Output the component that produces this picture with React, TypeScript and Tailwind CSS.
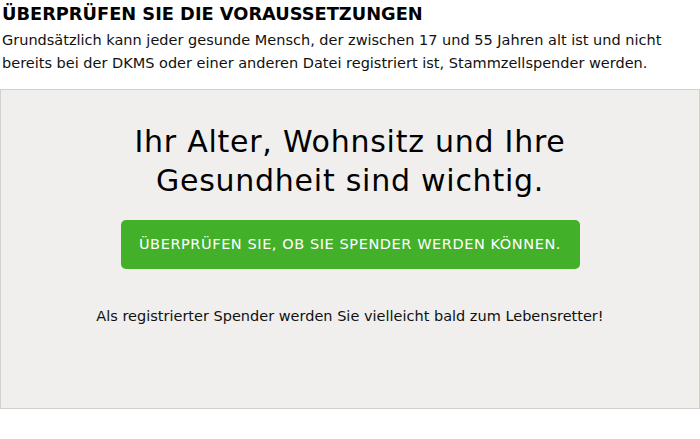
export default function App() {
  return (
    <div className="w-[700px] h-[439px] bg-white text-black font-['DejaVu_Sans',sans-serif]">
      <div className="pl-[2px] pt-[3px]">
        <h2 className="text-[17.8px] leading-[22px] font-bold">ÜBERPRÜFEN SIE DIE VORAUSSETZUNGEN</h2>
        <p className="mt-[4px] text-[14.5px] leading-[23px] text-[#111]">
          Grundsätzlich kann jeder gesunde Mensch, der zwischen 17 und 55 Jahren alt ist und nicht bereits bei der DKMS oder einer anderen Datei registriert ist, Stammzellspender werden.
        </p>
      </div>
      <div className="mt-[14px] h-[320px] border border-[#d2d1cb] bg-[#f0efed] flex flex-col items-center">
        <h1 className="mt-[33px] w-[520px] text-center text-[30px] leading-[38.5px] tracking-[0.025em] text-black">
          Ihr Alter, Wohnsitz und Ihre Gesundheit sind wichtig.
        </h1>
        <button className="mt-[20px] w-[459px] h-[49px] rounded-[5px] bg-[#43b02a] text-white text-[14.5px] tracking-[0.04em]">
          ÜBERPRÜFEN SIE, OB SIE SPENDER WERDEN KÖNNEN.
        </button>
        <p className="mt-[37px] text-[14.5px] text-[#111]">Als registrierter Spender werden Sie vielleicht bald zum Lebensretter!</p>
      </div>
    </div>
  );
}
